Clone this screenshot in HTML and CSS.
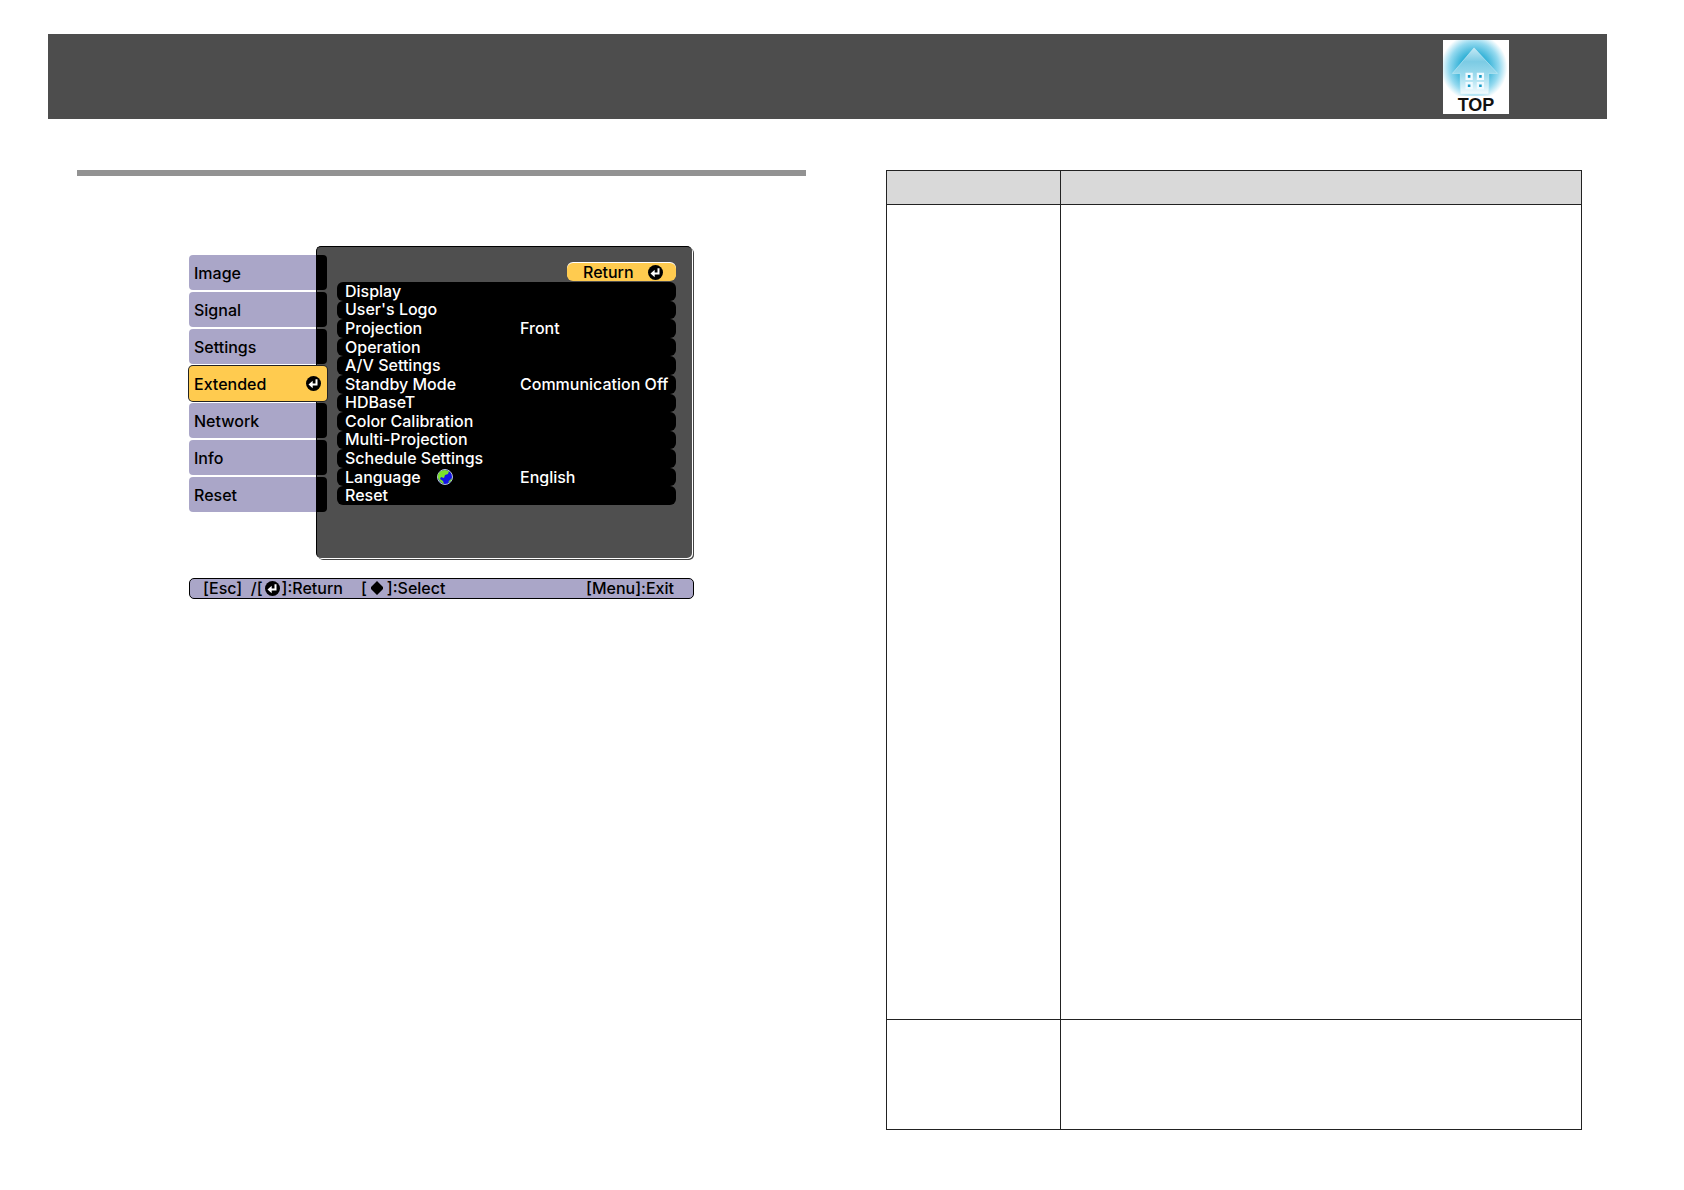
FILE: index.html
```html
<!DOCTYPE html>
<html lang="en">
<head>
  <meta charset="UTF-8">
  <meta name="viewport" content="width=device-width, initial-scale=1.0">
  <title>Extended Menu</title>
  <link rel="stylesheet" href="styles.css">
</head>
<body>
<!-- Shared icons -->
<svg class="sprite" aria-hidden="true">
  <symbol id="enter" viewBox="0 0 15 15">
    <circle cx="7.5" cy="7.5" r="7.5" fill="#000"/>
    <path d="M10.5 3.2v5.300H5.500" fill="none" stroke="#fff" stroke-width="2"/>
    <path d="M2.500 8.500l4.200-3.800v7.600z" fill="#fff"/>
  </symbol>
</svg>

<header class="page-header">
  <a href="#" class="home">
    <svg class="home-icon" viewBox="0 0 66 57" aria-hidden="true">
      <defs>
        <radialGradient id="glow">
          <stop offset="0" stop-color="#0590bd"/>
          <stop offset="0.4" stop-color="#2fb0d6"/>
          <stop offset="0.75" stop-color="#93d9ef"/>
          <stop offset="1" stop-color="#fff"/>
        </radialGradient>
        <linearGradient id="wall" x1="0" y1="0" x2="0" y2="1">
          <stop offset="0" stop-color="#c4e9f5"/>
          <stop offset="0.3" stop-color="#7ccbe4"/>
          <stop offset="0.6" stop-color="#9edbed"/>
          <stop offset="1" stop-color="#f4fcff"/>
        </linearGradient>
      </defs>
      <circle cx="31" cy="28" r="34" fill="url(#glow)"/>
      <path d="M31 8l24 26H46v21H17V34H9z" fill="url(#wall)" stroke="#c9edf7" stroke-width="0.6"/>
      <path d="M23.500 34.500h5v5h-5zM35 34.500h5v5h-5zM23.500 44h5v5h-5zM35 44h5v5h-5z" fill="#159ac6" stroke="#effaff" stroke-width="2.4"/>
    </svg>
    <span>TOP</span>
  </a>
</header>

<main class="content">
  <section class="column">
    <hr class="rule">
    <div class="osd">
      <div class="menu">
        <nav class="tabs">
          <button class="tab">Image</button>
          <button class="tab">Signal</button>
          <button class="tab">Settings</button>
          <button class="tab active">Extended <svg class="enter"><use href="#enter"/></svg></button>
          <button class="tab">Network</button>
          <button class="tab">Info</button>
          <button class="tab">Reset</button>
        </nav>
        <div class="panel">
          <button class="return">Return <svg class="enter"><use href="#enter"/></svg></button>
          <div class="items">
            <button class="item">Display</button>
            <button class="item">User's Logo</button>
            <button class="item"><span class="name">Projection</span><span>Front</span></button>
            <button class="item">Operation</button>
            <button class="item">A/V Settings</button>
            <button class="item"><span class="name">Standby Mode</span><span>Communication Off</span></button>
            <button class="item">HDBaseT</button>
            <button class="item">Color Calibration</button>
            <button class="item">Multi-Projection</button>
            <button class="item">Schedule Settings</button>
            <button class="item">
              <span class="name">Language
                <svg class="globe" viewBox="0 0 16 16" aria-hidden="true">
                  <circle cx="8" cy="8" r="7.500" fill="#1414e6" stroke="#b9c4dc"/>
                  <path d="M1 9C0 4 4 1 8 1l4 1-1 3-3 1-1 3-3-1-1 2 3 2 1 3C4 14 2 12 1 9z" fill="#7be02c"/>
                  <path d="M12 12l3-3-1 3-3 2z" fill="#7be02c"/>
                </svg>
              </span>
              <span>English</span>
            </button>
            <button class="item">Reset</button>
          </div>
        </div>
      </div>
      <div class="guide">
        <span class="keys">[Esc]  /[<svg class="enter"><use href="#enter"/></svg>]:Return</span>
        <span class="keys">[<svg class="updown" viewBox="0 0 14 14" aria-hidden="true"><path d="M7 0l6 6H1zM7 14l6-6H1z"/><path d="M1 6h12v2H1z"/></svg>]:Select</span>
        <span class="keys exit">[Menu]:Exit</span>
      </div>
    </div>
  </section>

  <section class="column">
    <table class="details">
      <thead>
        <tr><th></th><th></th></tr>
      </thead>
      <tbody>
        <tr class="long"><td></td><td></td></tr>
        <tr class="short"><td></td><td></td></tr>
      </tbody>
    </table>
  </section>
</main>
</body>
</html>
```
FILE: styles.css
```css
* {
    margin: 0;
    padding: 0;
    box-sizing: border-box;
}

body {
    padding: 34px 77px 34px 48px;
    font-family: Inter, "Liberation Sans", sans-serif;
    font-size: 16px;
    font-weight: 500;
    color: #000;
    background-color: #fff;
}

button {
    border: none;
    font: inherit;
    color: inherit;
    text-align: left;
    cursor: pointer;
}

.sprite {
    display: none;
}

.page-header {
    display: flex;
    justify-content: flex-end;
    padding: 6px 98px 5px;
    background-color: #4d4d4d;
}

.home {
    display: flex;
    flex-direction: column;
    width: 66px;
    height: 74px;
    background-color: #fff;
    color: #111;
    font-family: "Liberation Sans", Arial, sans-serif;
    font-size: 18px;
    font-weight: bold;
    line-height: 18px;
    text-align: center;
    text-decoration: none;
}

.home-icon {
    width: 66px;
    height: 57px;
}

.content {
    display: grid;
    grid-template-columns: 729fr 696fr;
    gap: 80px;
    padding: 51px 25px 0 29px;
}

.rule {
    height: 6px;
    border: none;
    background-color: #929292;
}

/* Projector on-screen menu */
.osd {
    width: 505px;
    margin: 70px auto 0;
    line-height: 18px;
}

.menu {
    display: flex;
    align-items: flex-start;
    padding-right: 2px;
}

.tabs {
    position: relative;
    z-index: 1;
    display: flex;
    flex-direction: column;
    gap: 2px;
    width: 138px;
    margin: 9px -11px 0 0;
}

.tab {
    display: flex;
    align-items: center;
    justify-content: space-between;
    height: 35px;
    padding: 0 6px 0 5px;
    border-radius: 4px;
    background: linear-gradient(to right, #aaa6c8 127px, #000 127px);
}

.tab.active {
    background: #ffcb4f;
    box-shadow: 0 0 0 1px #222;
}

.enter {
    width: 15px;
    height: 15px;
}

.panel {
    display: flex;
    flex: 1;
    flex-direction: column;
    height: 312px;
    padding: 16px 16px 0 20px;
    border: 1px solid #000;
    border-right: none;
    border-bottom: none;
    border-radius: 5px;
    background-color: #4f4f4f;
    box-shadow: 1px 1px 0 #fff, 2px 2px 0 #444;
}

.return {
    display: flex;
    align-items: center;
    align-self: flex-end;
    justify-content: space-between;
    width: 109px;
    height: 18px;
    margin-bottom: 1px;
    padding: 0 13px 0 16px;
    border-radius: 6px;
    background-color: #ffcb4f;
    box-shadow: 0 -1px 0 #fff;
}

.items {
    display: grid;
    grid-template-rows: repeat(12, 1fr);
    height: 223px;
    line-height: 16px;
    color: #fff;
}

.item {
    display: flex;
    align-items: center;
    padding: 0 0 1px 8px;
    border-radius: 6px;
    background-color: #000;
}

.name {
    display: flex;
    align-items: center;
    gap: 16px;
    width: 175px;
}

.globe {
    width: 16px;
    height: 16px;
}

.guide {
    display: flex;
    align-items: center;
    gap: 18px;
    height: 21px;
    margin-top: 20px;
    padding: 0 19px 1px 13px;
    border: 1px solid #000;
    border-radius: 5px;
    background-color: #aaa6c8;
}

.keys {
    display: flex;
    align-items: center;
    gap: 2px;
    white-space: pre;
}

.exit {
    margin-left: auto;
}

.updown {
    width: 16px;
    height: 14px;
}

/* Settings table */
.details {
    width: 100%;
    border-collapse: collapse;
    table-layout: fixed;
}

.details th,
.details td {
    height: 34px;
    border: 1px solid #222;
}

.details th {
    background-color: #d9d9d9;
}

.details th:first-child {
    width: 25%;
}

.details .long td {
    height: 815px;
}

.details .short td {
    height: 110px;
}
```
